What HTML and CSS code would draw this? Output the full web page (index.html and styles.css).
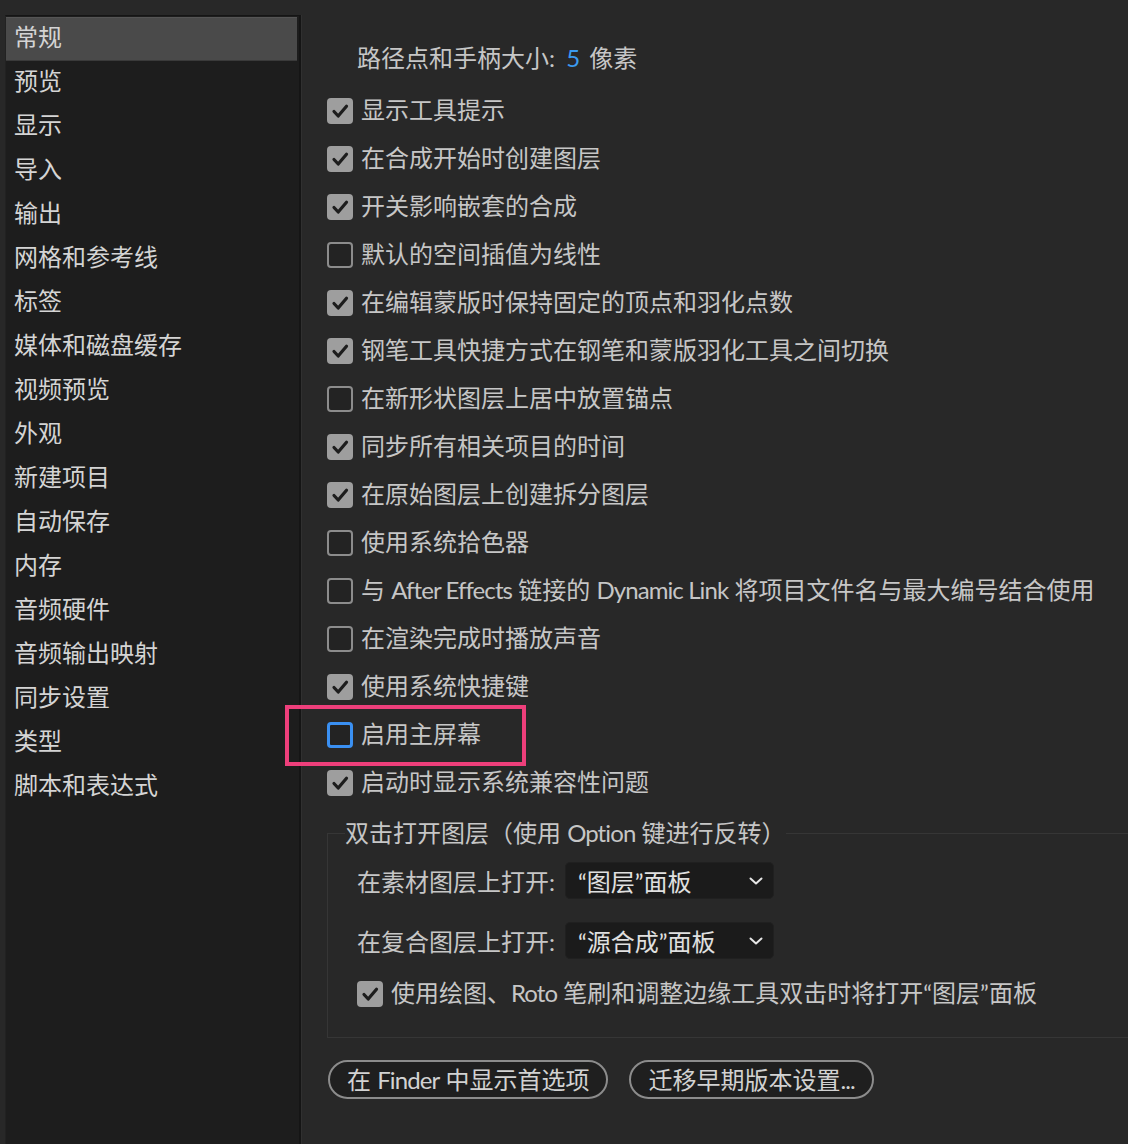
FILE: index.html
```html
<!DOCTYPE html>
<html lang="zh-CN">
<head>
<meta charset="utf-8">
<title>首选项</title>
<link rel="stylesheet" href="styles.css">
</head>
<body>
<div class="window">
  <nav class="sidebar">
    <div class="nav-item selected">常规</div>
    <div class="nav-item">预览</div>
    <div class="nav-item">显示</div>
    <div class="nav-item">导入</div>
    <div class="nav-item">输出</div>
    <div class="nav-item">网格和参考线</div>
    <div class="nav-item">标签</div>
    <div class="nav-item">媒体和磁盘缓存</div>
    <div class="nav-item">视频预览</div>
    <div class="nav-item">外观</div>
    <div class="nav-item">新建项目</div>
    <div class="nav-item">自动保存</div>
    <div class="nav-item">内存</div>
    <div class="nav-item">音频硬件</div>
    <div class="nav-item">音频输出映射</div>
    <div class="nav-item">同步设置</div>
    <div class="nav-item">类型</div>
    <div class="nav-item">脚本和表达式</div>
  </nav>
  <main class="content">
    <div class="header-row">路径点和手柄大小: <span class="value">5</span> 像素</div>

    <div class="check-row"><span class="cb checked"><svg viewBox="0 0 26 26"><path d="M7 13.5 L11.2 18 L19.5 8.2"/></svg></span><span class="lbl">显示工具提示</span></div>
    <div class="check-row"><span class="cb checked"><svg viewBox="0 0 26 26"><path d="M7 13.5 L11.2 18 L19.5 8.2"/></svg></span><span class="lbl">在合成开始时创建图层</span></div>
    <div class="check-row"><span class="cb checked"><svg viewBox="0 0 26 26"><path d="M7 13.5 L11.2 18 L19.5 8.2"/></svg></span><span class="lbl">开关影响嵌套的合成</span></div>
    <div class="check-row"><span class="cb"></span><span class="lbl">默认的空间插值为线性</span></div>
    <div class="check-row"><span class="cb checked"><svg viewBox="0 0 26 26"><path d="M7 13.5 L11.2 18 L19.5 8.2"/></svg></span><span class="lbl">在编辑蒙版时保持固定的顶点和羽化点数</span></div>
    <div class="check-row"><span class="cb checked"><svg viewBox="0 0 26 26"><path d="M7 13.5 L11.2 18 L19.5 8.2"/></svg></span><span class="lbl">钢笔工具快捷方式在钢笔和蒙版羽化工具之间切换</span></div>
    <div class="check-row"><span class="cb"></span><span class="lbl">在新形状图层上居中放置锚点</span></div>
    <div class="check-row"><span class="cb checked"><svg viewBox="0 0 26 26"><path d="M7 13.5 L11.2 18 L19.5 8.2"/></svg></span><span class="lbl">同步所有相关项目的时间</span></div>
    <div class="check-row"><span class="cb checked"><svg viewBox="0 0 26 26"><path d="M7 13.5 L11.2 18 L19.5 8.2"/></svg></span><span class="lbl">在原始图层上创建拆分图层</span></div>
    <div class="check-row"><span class="cb"></span><span class="lbl">使用系统拾色器</span></div>
    <div class="check-row"><span class="cb"></span><span class="lbl">与 <span class="lat">After Effects</span> 链接的 <span class="lat">Dynamic Link</span> 将项目文件名与最大编号结合使用</span></div>
    <div class="check-row"><span class="cb"></span><span class="lbl">在渲染完成时播放声音</span></div>
    <div class="check-row"><span class="cb checked"><svg viewBox="0 0 26 26"><path d="M7 13.5 L11.2 18 L19.5 8.2"/></svg></span><span class="lbl">使用系统快捷键</span></div>
    <div class="check-row"><span class="cb focus"></span><span class="lbl">启用主屏幕</span><span class="highlight-box"></span></div>
    <div class="check-row"><span class="cb checked"><svg viewBox="0 0 26 26"><path d="M7 13.5 L11.2 18 L19.5 8.2"/></svg></span><span class="lbl">启动时显示系统兼容性问题</span></div>

    <fieldset class="group">
      <legend>双击打开图层（使用 <span class="lat">Option</span> 键进行反转）</legend>
      <div class="select-row">
        <span class="select-label">在素材图层上打开:</span>
        <div class="select"><span class="select-text">“图层”面板</span><svg class="chev" viewBox="0 0 14 8"><path d="M1.5 1.5 L7 6.5 L12.5 1.5"/></svg></div>
      </div>
      <div class="select-row">
        <span class="select-label">在复合图层上打开:</span>
        <div class="select"><span class="select-text">“源合成”面板</span><svg class="chev" viewBox="0 0 14 8"><path d="M1.5 1.5 L7 6.5 L12.5 1.5"/></svg></div>
      </div>
      <div class="check-row inner"><span class="cb checked"><svg viewBox="0 0 26 26"><path d="M7 13.5 L11.2 18 L19.5 8.2"/></svg></span><span class="lbl">使用绘图、<span class="lat">Roto</span> 笔刷和调整边缘工具双击时将打开“图层”面板</span></div>
    </fieldset>

    <div class="buttons">
      <button class="pill">在 <span class="lat">Finder</span> 中显示首选项</button>
      <button class="pill">迁移早期版本设置<span class="lat">...</span></button>
    </div>
  </main>
</div>
</body>
</html>
```

FILE: styles.css
```css
* { box-sizing: border-box; }

html, body {
  margin: 0;
  padding: 0;
  background: #282828;
  height: 1144px;
  overflow: hidden;
}

body {
  font-family: "Lato", "Noto Sans CJK SC", "Noto Sans", sans-serif;
  font-size: 24px;
  color: #c6c6c6;
}

.lat {
  letter-spacing: -0.9px;
}

.window {
  display: flex;
  height: 1144px;
}

.sidebar {
  margin-top: 15px;
  margin-left: 5px;
  width: 296px;
  flex: none;
  height: 1129px;
  background: #1d1d1d;
  border-top: 1px solid #151515;
  border-left: 1px solid #222;
  border-right: 2px solid #151515;
  box-shadow: 1px 0 0 #303030;
  padding-top: 1px;
}

.nav-item {
  height: 44px;
  line-height: 40px;
  padding-bottom: 4px;
  padding-left: 8px;
  color: #d4d4d4;
  white-space: nowrap;
}

.nav-item.selected {
  background: #4a4a4a;
  border-top: 1px solid #555;
  border-bottom: 1px solid #3a3a3a;
  margin-right: 2px;
  line-height: 38px;
}

.content {
  flex: 1;
  padding-left: 26px;
  padding-top: 34px;
  min-width: 0;
}

.header-row {
  height: 48px;
  line-height: 48px;
  padding-left: 30px;
  margin-bottom: 5px;
  white-space: nowrap;
}

.value {
  color: #3b9bf0;
  margin: 0 3px 0 5px;
}

.check-row {
  display: flex;
  align-items: center;
  gap: 8px;
  height: 48px;
  white-space: nowrap;
  position: relative;
}

.lbl {
  line-height: 32px;
  position: relative;
  top: -1px;
}

.cb {
  width: 26px;
  height: 26px;
  flex: none;
  border-radius: 4px;
  border: 2px solid #8c8c8c;
  background: #232323;
  display: flex;
  align-items: center;
  justify-content: center;
}

.cb.checked {
  background: #9e9e9e;
  border: none;
}

.cb svg {
  width: 26px;
  height: 26px;
}

.cb svg path {
  fill: none;
  stroke: #1d1d1d;
  stroke-width: 3.2;
  stroke-linecap: round;
  stroke-linejoin: round;
}

.cb.focus {
  border: 3px solid #3a90f2;
}

.highlight-box {
  position: absolute;
  left: -42px;
  top: -6px;
  width: 241px;
  height: 61px;
  border: 4px solid #ee3f7b;
  pointer-events: none;
}

.group {
  margin: 9px 0 0 0;
  border: 1px solid #363636;
  border-right: none;
  padding: 12px 0 30px 29px;
  min-width: 0;
}

.group legend {
  padding: 0;
  margin-left: -12px;
  line-height: 34px;
  white-space: nowrap;
}

.select-row {
  display: flex;
  align-items: center;
  height: 37px;
  margin-bottom: 23px;
}

.select-label {
  width: 208px;
  flex: none;
  white-space: nowrap;
}

.select {
  width: 209px;
  height: 37px;
  background: #1b1b1b;
  border-radius: 5px;
  border: 1px solid #202020;
  display: flex;
  align-items: center;
  padding: 0 10px 0 12px;
  color: #e0e0e0;
  white-space: nowrap;
}

.select-text {
  flex: 1;
}

.chev {
  width: 14px;
  height: 8px;
  flex: none;
}

.chev path {
  fill: none;
  stroke: #e6e6e6;
  stroke-width: 2;
  stroke-linecap: round;
  stroke-linejoin: round;
}

.check-row.inner {
  height: 26px;
  margin-top: -1px;
}

.buttons {
  display: flex;
  gap: 21px;
  margin-top: 22px;
  padding-left: 1px;
}

.pill {
  font-family: inherit;
  font-size: 24px;
  color: #d2d2d2;
  background: #1f1f1f;
  border: 2px solid #8c8c8c;
  border-radius: 20px;
  height: 39px;
  padding: 0 17px;
  line-height: 33px;
  white-space: nowrap;
}
```
